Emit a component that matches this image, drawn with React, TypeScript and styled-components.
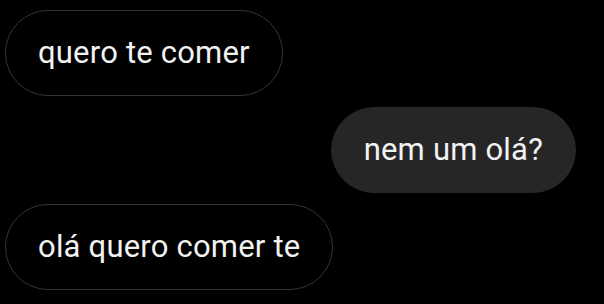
import React from "react";
import styled, { createGlobalStyle } from "styled-components";

const GlobalStyle = createGlobalStyle`
  html, body {
    margin: 0;
    padding: 0;
    background: #000;
  }
  body {
    width: 604px;
    height: 304px;
    overflow: hidden;
    font-family: Roboto, "Noto Sans", sans-serif;
  }
`;

const Thread = styled.div`
  display: flex;
  flex-direction: column;
  gap: 11px;
  padding: 10px 28px 0 5px;
  width: 604px;
  height: 304px;
  box-sizing: border-box;
  background: #000;
`;

const Bubble = styled.div<{ $mine?: boolean }>`
  align-self: ${(p) => (p.$mine ? "flex-end" : "flex-start")};
  display: flex;
  align-items: center;
  height: 86px;
  box-sizing: border-box;
  padding: 0 32px 2px;
  border-radius: 43px;
  border: 1.5px solid ${(p) => (p.$mine ? "#262626" : "#353535")};
  background: ${(p) => (p.$mine ? "#262626" : "#000")};
  color: #f2f2f2;
  font-size: 31px;
  letter-spacing: 0.2px;
  white-space: nowrap;
`;

const messages = [
  { text: "quero te comer", mine: false },
  { text: "nem um olá?", mine: true },
  { text: "olá quero comer te", mine: false },
];

export default function App() {
  return (
    <>
      <GlobalStyle />
      <Thread>
        {messages.map((m, i) => (
          <Bubble key={i} $mine={m.mine}>
            {m.text}
          </Bubble>
        ))}
      </Thread>
    </>
  );
}
